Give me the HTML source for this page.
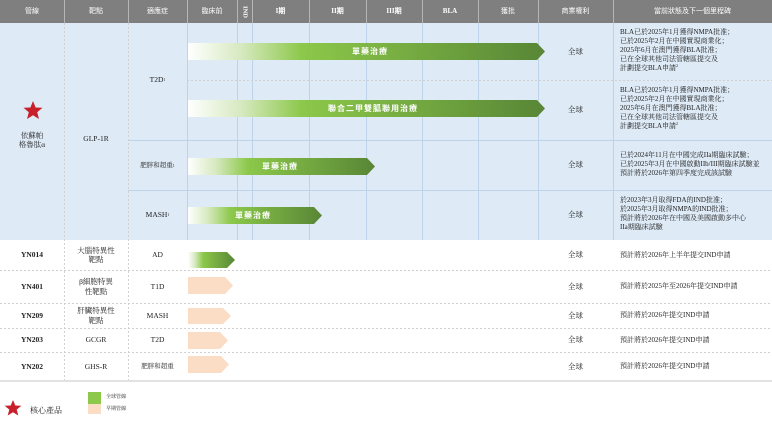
<!DOCTYPE html>
<html><head><meta charset="utf-8"><style>
*{margin:0;padding:0;box-sizing:border-box}
body{width:772px;height:424px;background:#fff;position:relative;overflow:hidden;font-family:"Liberation Serif","Noto Serif CJK SC",serif;color:#222}
.a{position:absolute;display:flex;align-items:center;justify-content:center;text-align:center;font-size:7.5px;line-height:9.5px}
.h{color:#fff;font-family:"Liberation Sans","Noto Sans CJK TC",sans-serif;font-size:7px}
.l{justify-content:flex-start;text-align:left;font-size:7px;line-height:9px}
.b{font-weight:bold}
sup{font-size:4px;line-height:0;vertical-align:3px}
.bt{position:absolute;color:#fff;font-family:"Liberation Sans","Noto Sans CJK TC",sans-serif;font-size:8px;font-weight:bold;letter-spacing:1px}
</style></head><body>
<svg width="772" height="424" style="position:absolute;left:0;top:0">
<defs>
<linearGradient id="g" x1="0" x2="1" y1="0" y2="0">
<stop offset="0" stop-color="#fff"/><stop offset="0.15" stop-color="#d6e9bf"/><stop offset="0.32" stop-color="#8cc84a"/><stop offset="1" stop-color="#588636"/></linearGradient>
</defs>
<rect x="0" y="0" width="772" height="23" fill="#7f7f7f"/>
<g stroke="#b5b5b5" stroke-width="1">
<line x1="64.5" y1="0" x2="64.5" y2="23"/><line x1="128.5" y1="0" x2="128.5" y2="23"/><line x1="187.5" y1="0" x2="187.5" y2="23"/><line x1="237.5" y1="0" x2="237.5" y2="23"/><line x1="252.5" y1="0" x2="252.5" y2="23"/><line x1="309.5" y1="0" x2="309.5" y2="23"/><line x1="366.5" y1="0" x2="366.5" y2="23"/><line x1="422.5" y1="0" x2="422.5" y2="23"/><line x1="478.5" y1="0" x2="478.5" y2="23"/><line x1="538.5" y1="0" x2="538.5" y2="23"/><line x1="613.5" y1="0" x2="613.5" y2="23"/>
</g>
<rect x="0" y="23" width="772" height="217" fill="#deeaf6"/>
<g stroke="#bcd3ea" stroke-width="1">
<line x1="187.5" y1="23" x2="187.5" y2="240"/><line x1="237.5" y1="23" x2="237.5" y2="240"/><line x1="252.5" y1="23" x2="252.5" y2="240"/><line x1="309.5" y1="23" x2="309.5" y2="240"/><line x1="366.5" y1="23" x2="366.5" y2="240"/><line x1="422.5" y1="23" x2="422.5" y2="240"/><line x1="478.5" y1="23" x2="478.5" y2="240"/><line x1="538.5" y1="23" x2="538.5" y2="240"/><line x1="613.5" y1="23" x2="613.5" y2="240"/>
<line x1="128" y1="140.5" x2="772" y2="140.5"/><line x1="128" y1="190.5" x2="772" y2="190.5"/>
</g>
<g stroke="#d0d0d0" stroke-dasharray="2,2" stroke-width="1">
<line x1="64.5" y1="23" x2="64.5" y2="380"/><line x1="128.5" y1="23" x2="128.5" y2="380"/>
<line x1="187" y1="80.5" x2="772" y2="80.5"/>
<line x1="0" y1="270.5" x2="772" y2="270.5"/><line x1="0" y1="303.5" x2="772" y2="303.5"/><line x1="0" y1="328.5" x2="772" y2="328.5"/><line x1="0" y1="352.5" x2="772" y2="352.5"/>
</g>
<line x1="0" y1="381" x2="772" y2="381" stroke="#d8d8d8" stroke-width="1.5"/>
<polygon points="188,43 537,43 545,51.5 537,60 188,60" fill="url(#g)"/>
<polygon points="188,100 537,100 545,108.5 537,117 188,117" fill="url(#g)"/>
<polygon points="188,158 367,158 375,166.5 367,175 188,175" fill="url(#g)"/>
<polygon points="188,207 314,207 322,215.5 314,224 188,224" fill="url(#g)"/>
<polygon points="188,252 227,252 235,260 227,268 188,268" fill="url(#g)"/>
<g fill="#fbdcc4">
<polygon points="188,277 225,277 233,285.5 225,294 188,294"/>
<polygon points="188,308 223,308 231,316 223,324 188,324"/>
<polygon points="188,332 220,332 228,340.5 220,349 188,349"/>
<polygon points="188,356 221,356 229,364.5 221,373 188,373"/>
<rect x="88" y="403" width="13" height="11"/>
</g>
<rect x="88" y="392" width="13" height="12" fill="#8cc84a"/>
<polygon fill="#c8202a" points="33,101 35.6,107.5 42.5,107.8 37.2,112.2 39,119 33,115.2 27,119 28.8,112.2 23.5,107.8 30.4,107.5"/>
<polygon fill="#c8202a" points="13,400 15.3,405.5 21.3,405.8 16.7,409.6 18.3,415.5 13,412.2 7.7,415.5 9.3,409.6 4.7,405.8 10.7,405.5"/>
</svg>
<div class="a h" style="left:0;top:0;width:64px;height:23px">管線</div>
<div class="a h" style="left:64px;top:0;width:64px;height:23px">靶點</div>
<div class="a h" style="left:128px;top:0;width:59px;height:23px">適應症</div>
<div class="a h" style="left:187px;top:0;width:50px;height:23px">臨床前</div>
<div class="a h b" style="left:237px;top:0;width:15px;height:23px;font-family:'Liberation Serif',serif;writing-mode:vertical-rl;font-size:6.5px">IND</div>
<div class="a h b" style="left:252px;top:0;width:57px;height:23px;font-family:'Liberation Serif',serif">I期</div>
<div class="a h b" style="left:309px;top:0;width:57px;height:23px;font-family:'Liberation Serif',serif">II期</div>
<div class="a h b" style="left:366px;top:0;width:56px;height:23px;font-family:'Liberation Serif',serif">III期</div>
<div class="a h b" style="left:422px;top:0;width:56px;height:23px;font-family:'Liberation Serif',serif">BLA</div>
<div class="a h" style="left:478px;top:0;width:60px;height:23px">獲批</div>
<div class="a h" style="left:538px;top:0;width:75px;height:23px">商業權利</div>
<div class="a h" style="left:613px;top:0;width:159px;height:23px">當前狀態及下一個里程碑</div>

<div class="a" style="left:0;top:128px;width:64px;height:24px">依蘇帕<br>格魯肽α</div>
<div class="a" style="left:64px;top:133px;width:64px;height:12px">GLP-1R</div>
<div class="a" style="left:128px;top:74px;width:59px;height:12px">T2D<sup>1</sup></div>
<div class="a" style="left:128px;top:160px;width:59px;height:12px;font-size:6.5px">肥胖和超重<sup>1</sup></div>
<div class="a" style="left:128px;top:209px;width:59px;height:12px">MASH<sup>1</sup></div>

<div class="bt" style="left:352px;top:46px">單藥治療</div>
<div class="bt" style="left:328px;top:103px">聯合二甲雙胍聯用治療</div>
<div class="bt" style="left:262px;top:161px">單藥治療</div>
<div class="bt" style="left:235px;top:210px">單藥治療</div>

<div class="a" style="left:538px;top:46px;width:75px;height:12px">全球</div>
<div class="a" style="left:538px;top:104px;width:75px;height:12px">全球</div>
<div class="a" style="left:538px;top:159px;width:75px;height:12px">全球</div>
<div class="a" style="left:538px;top:209px;width:75px;height:12px">全球</div>
<div class="a l" style="left:620px;top:28px;width:152px;height:48px;display:block">BLA已於2025年1月獲得NMPA批准；<br>已於2025年2月在中國實現商業化；<br>2025年6月在澳門獲得BLA批准；<br>已在全球其他司法管轄區提交及<br>計劃提交BLA申請<sup>2</sup></div>
<div class="a l" style="left:620px;top:86px;width:152px;height:48px;display:block">BLA已於2025年1月獲得NMPA批准；<br>已於2025年2月在中國實現商業化；<br>2025年6月在澳門獲得BLA批准；<br>已在全球其他司法管轄區提交及<br>計劃提交BLA申請<sup>2</sup></div>
<div class="a l" style="left:620px;top:151px;width:152px;height:30px;display:block;white-space:nowrap">已於2024年11月在中國完成IIa期臨床試驗；<br>已於2025年3月在中國啟動IIb/III期臨床試驗並<br>預計將於2026年第四季度完成該試驗</div>
<div class="a l" style="left:620px;top:196px;width:152px;height:40px;display:block">於2023年3月取得FDA的IND批准；<br>於2025年3月取得NMPA的IND批准；<br>預計將於2026年在中國及美國啟動多中心<br>IIa期臨床試驗</div>

<div class="a b" style="left:0;top:240px;width:64px;height:30px">YN014</div>
<div class="a" style="left:64px;top:240px;width:64px;height:30px">大腦特異性<br>靶點</div>
<div class="a" style="left:128px;top:240px;width:59px;height:30px">AD</div>
<div class="a" style="left:538px;top:240px;width:75px;height:30px">全球</div>
<div class="a l" style="left:620px;top:240px;width:152px;height:30px">預計將於2026年上半年提交IND申請</div>

<div class="a b" style="left:0;top:270px;width:64px;height:33px">YN401</div>
<div class="a" style="left:64px;top:270px;width:64px;height:33px">β細胞特異<br>性靶點</div>
<div class="a" style="left:128px;top:270px;width:59px;height:33px">T1D</div>
<div class="a" style="left:538px;top:270px;width:75px;height:33px">全球</div>
<div class="a l" style="left:620px;top:270px;width:152px;height:33px">預計將於2025年至2026年提交IND申請</div>

<div class="a b" style="left:0;top:303px;width:64px;height:25px">YN209</div>
<div class="a" style="left:64px;top:303px;width:64px;height:25px">肝臟特異性<br>靶點</div>
<div class="a" style="left:128px;top:303px;width:59px;height:25px">MASH</div>
<div class="a" style="left:538px;top:303px;width:75px;height:25px">全球</div>
<div class="a l" style="left:620px;top:303px;width:152px;height:25px">預計將於2026年提交IND申請</div>

<div class="a b" style="left:0;top:328px;width:64px;height:24px">YN203</div>
<div class="a" style="left:64px;top:328px;width:64px;height:24px">GCGR</div>
<div class="a" style="left:128px;top:328px;width:59px;height:24px">T2D</div>
<div class="a" style="left:538px;top:328px;width:75px;height:24px">全球</div>
<div class="a l" style="left:620px;top:328px;width:152px;height:24px">預計將於2026年提交IND申請</div>

<div class="a b" style="left:0;top:352px;width:64px;height:29px">YN202</div>
<div class="a" style="left:64px;top:352px;width:64px;height:29px">GHS-R</div>
<div class="a" style="left:128px;top:352px;width:59px;height:29px;font-size:6.5px">肥胖和超重</div>
<div class="a" style="left:538px;top:352px;width:75px;height:29px">全球</div>
<div class="a l" style="left:620px;top:352px;width:152px;height:29px">預計將於2026年提交IND申請</div>

<div class="a l" style="left:30px;top:404px;width:50px;height:12px;font-size:8px">核心產品</div>
<div class="a l" style="left:106px;top:392px;width:40px;height:10px;font-size:5px">全球管線</div>
<div class="a l" style="left:106px;top:404px;width:40px;height:10px;font-size:5px">早期管線</div>
</body></html>
